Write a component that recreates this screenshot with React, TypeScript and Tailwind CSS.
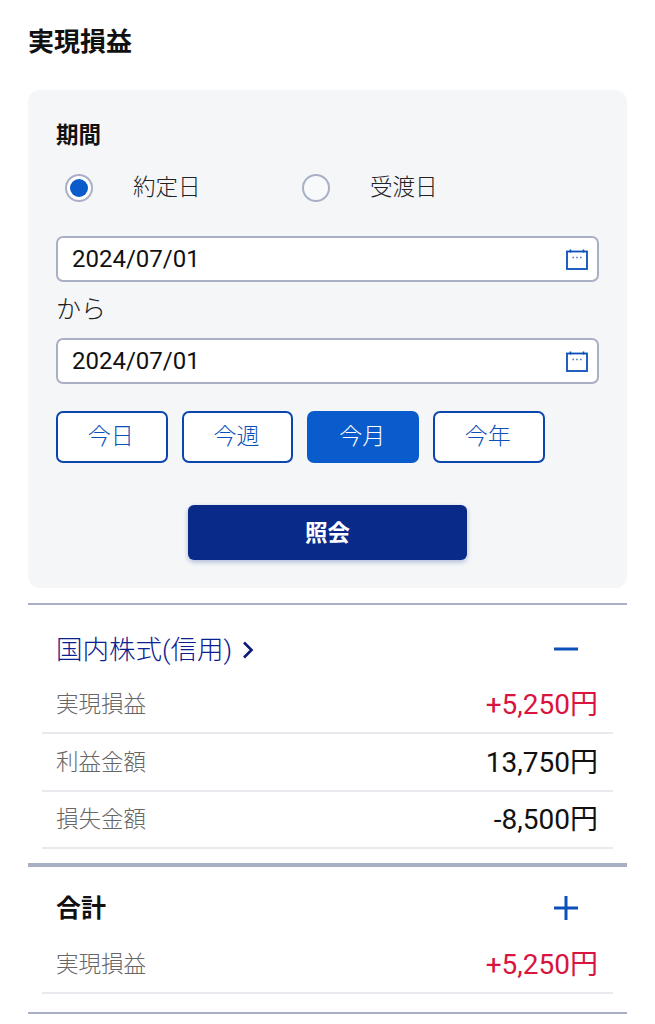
function CalendarIcon() {
  return (
    <svg width="22" height="21" viewBox="0 0 22 21" fill="none" className="absolute right-[9px] top-[11px]">
      <rect x="1" y="2.5" width="20" height="17.5" stroke="#0b4fb8" strokeWidth="1.8" />
      <path d="M4.5 0.5V3.5M17.5 0.5V3.5" stroke="#0b4fb8" strokeWidth="1.6" />
      <path d="M6.5 8.5H8M10.2 8.5H11.7M14 8.5H15.5" stroke="#3f6fbd" strokeWidth="1.6" />
    </svg>
  );
}

function DateInput({ value }: { value: string }) {
  return (
    <div className="relative flex h-[46px] items-center rounded-[7px] border-2 border-[#a9b0c6] bg-white pl-[14px] text-[24px] text-[#111]">
      {value}
      <CalendarIcon />
    </div>
  );
}

function Radio({ checked, label, width }: { checked?: boolean; label: string; width: string }) {
  return (
    <div className={`flex items-center ${width}`}>
      <span className={`flex h-[28px] w-[28px] items-center justify-center rounded-full border-2 border-[#a9b0c6] ${checked ? "bg-white" : "bg-[#f8f9fb]"}`}>
        {checked ? <span className="h-[18px] w-[18px] rounded-full bg-[#0a5bcb]" /> : null}
      </span>
      <span className="ml-[40px] text-[22.5px] font-light text-[#222]">{label}</span>
    </div>
  );
}

function RangeButton({ label, active }: { label: string; active?: boolean }) {
  return (
    <div className={`flex h-[52px] w-[111.5px] items-center justify-center rounded-[7px] border-2 pr-[2px] text-[23px] font-light ${active ? "border-[#0a5bcb] bg-[#0a5bcb] text-white" : "border-[#0b45ae] bg-white text-[#0b4fb8]"}`}>
      {label}
    </div>
  );
}

function Row({ label, value, red }: { label: string; value: string; red?: boolean }) {
  return (
    <div className="mx-[14px] flex h-[57.5px] items-center justify-between border-b-2 border-[#e8eaf0] pl-[14px] pr-[15px] pt-[2px]">
      <span className="text-[22.5px] font-light text-[#666]">{label}</span>
      <span className={`text-[28px] ${red ? "text-[#d9143f]" : "text-[#111]"}`}>{value}</span>
    </div>
  );
}

export default function App() {
  return (
    <div className="h-[1024px] w-[655px] overflow-hidden bg-white px-[28px] font-['Roboto','Noto_Sans_CJK_JP',sans-serif]">
      <h1 className="flex h-[90px] items-center pb-[5px] text-[26px] font-bold text-[#111]">実現損益</h1>

      <div className="h-[498px] rounded-[12px] bg-[#f4f6f8] px-[28px]">
        <div className="flex h-[66px] items-end pb-[3px] text-[22.5px] font-bold text-[#111]">期間</div>
        <div className="flex h-[60px] items-center pl-[9px] pt-[4px]">
          <Radio checked label="約定日" width="w-[237px]" />
          <Radio label="受渡日" width="w-[237px]" />
        </div>
        <div className="pt-[20px]">
          <DateInput value="2024/07/01" />
        </div>
        <div className="flex h-[56px] items-center text-[25px] font-light text-[#222]">から</div>
        <DateInput value="2024/07/01" />
        <div className="mt-[27px] flex gap-[14.2px]">
          <RangeButton label="今日" />
          <RangeButton label="今週" />
          <RangeButton label="今月" active />
          <RangeButton label="今年" />
        </div>
        <div className="mt-[42px] flex justify-center">
          <button className="h-[55px] w-[279px] rounded-[6px] bg-[#0a2a8a] pt-[2px] text-[22.5px] font-bold text-white shadow-[0_2px_5px_rgba(10,42,138,0.3)]">
            照会
          </button>
        </div>
      </div>

      <div className="mt-[15px] h-[2px] bg-[#a9b0c6]" />
      <div className="flex h-[71.5px] items-center justify-between pr-[49px] pl-[28px] pt-[18px]">
        <div className="flex items-center text-[26.5px] font-light text-[#0a2090]">
          国内株式(信用)
          <svg width="14" height="20" viewBox="0 0 14 20" fill="none" className="ml-[9px]">
            <path d="M3 2.5L10.5 10L3 17.5" stroke="#0a1a78" strokeWidth="2.6" />
          </svg>
        </div>
        <svg width="24" height="24" viewBox="0 0 24 24" fill="none">
          <path d="M0 11H24" stroke="#0b4fb8" strokeWidth="3" />
        </svg>
      </div>
      <Row label="実現損益" value="+5,250円" red />
      <Row label="利益金額" value="13,750円" />
      <Row label="損失金額" value="-8,500円" />

      <div className="mt-[14px] h-[4px] bg-[#a9b0c6]" />
      <div className="flex h-[69px] items-center justify-between pr-[49px] pl-[28px] pt-[13px]">
        <span className="pt-[2px] text-[25px] font-bold text-[#111]">合計</span>
        <svg width="24" height="24" viewBox="0 0 24 24" fill="none">
          <path d="M0 12H24M12 0V24" stroke="#0b4fb8" strokeWidth="3" />
        </svg>
      </div>
      <Row label="実現損益" value="+5,250円" red />
      <div className="mt-[18px] h-[2px] bg-[#a9b0c6]" />
    </div>
  );
}
